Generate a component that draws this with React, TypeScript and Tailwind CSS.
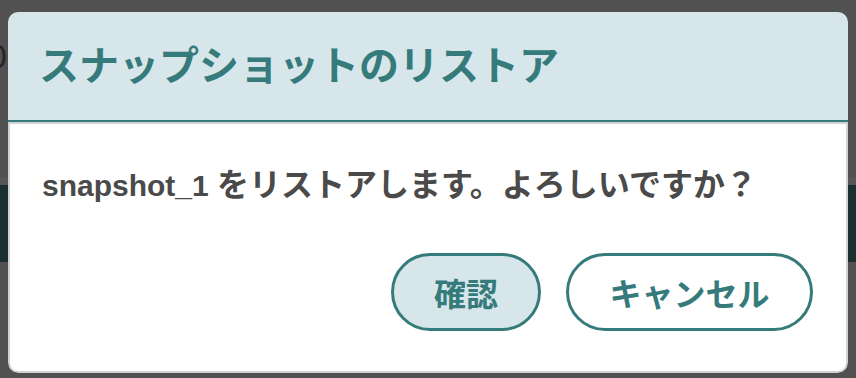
const App = () => {
  const teal = "text-[#367b7b]";

  return (
    <div className="relative h-[378px] w-full overflow-hidden bg-[#515151] font-['Liberation_Sans','Noto_Sans_CJK_JP',sans-serif]">
      {/* page behind the overlay */}
      <div className="flex flex-col">
        <div className="ml-[-12px] mt-[36px] h-[40px] text-[34px] leading-[40px] text-[#262626]">0</div>
        <div className="mt-[101px] h-[8px] bg-[#565656]" />
        <div className="h-[77px] bg-[#1b3131]" />
      </div>

      {/* dialog */}
      <div className="absolute left-[8px] top-[12px] flex w-[840px] flex-col overflow-hidden rounded-[10px]">
        <div className="flex h-[110px] items-center border-b-2 border-[#367b7b] bg-[#d7e6ea] px-[31px] pb-[6px]">
          <h2 className={`${teal} font-['Noto_Sans_CJK_JP',sans-serif] text-[40px] font-bold leading-none`}>
            スナップショットのリストア
          </h2>
        </div>

        <div className="flex flex-col rounded-b-[10px] border-2 border-[#d2d2d2] bg-white pb-[40px] pl-[32px] pr-[33px] pt-[40px]">
          <p className="h-[36px] font-bold leading-[36px] text-[#4a4a4a]">
            <span className="text-[30px]">snapshot_1 </span>
            <span className="font-['Noto_Sans_CJK_JP',sans-serif] text-[32px]">をリストアします。よろしいですか？</span>
          </p>

          <div className="mt-[53px] flex justify-end gap-[25px]">
            <button
              className={`${teal} flex h-[78px] w-[150px] items-center justify-center rounded-full border-[3px] border-[#367b7b] bg-[#d7e6ea] font-['Noto_Sans_CJK_JP',sans-serif] text-[32px] font-bold`}
            >
              確認
            </button>
            <button
              className={`${teal} flex h-[78px] w-[247px] items-center justify-center rounded-full border-[3px] border-[#367b7b] bg-white font-['Noto_Sans_CJK_JP',sans-serif] text-[32px] font-bold`}
            >
              キャンセル
            </button>
          </div>
        </div>
      </div>
    </div>
  );
};

export default App;
